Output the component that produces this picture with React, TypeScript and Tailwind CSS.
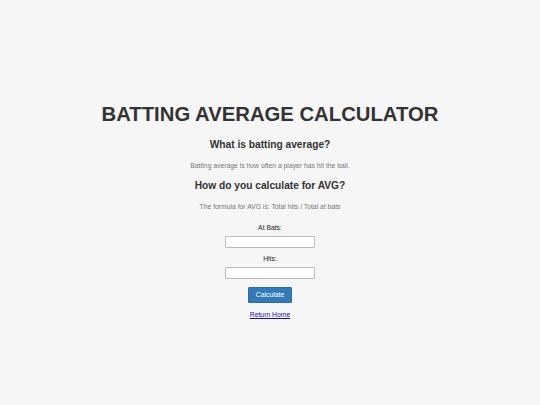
export default function App() {
  return (
    <div
      className="min-h-[405px] w-full bg-[#f6f6f6] flex flex-col items-center pt-[101px] text-center"
      style={{ fontFamily: '"Liberation Sans", Arial, sans-serif' }}
    >
      <h1 className="text-[20.3px] leading-[26px] font-bold text-[#333]">BATTING AVERAGE CALCULATOR</h1>
      <h2 className="mt-[11px] text-[10.2px] leading-[14px] font-bold text-[#333]">What is batting average?</h2>
      <p className="mt-[9px] text-[6.8px] leading-[9px] text-[#777]">
        Batting average is how often a player has hit the ball.
      </p>
      <h3 className="mt-[9px] text-[10.2px] leading-[14px] font-bold text-[#333]">How do you calculate for AVG?</h3>
      <p className="mt-[9px] text-[6.8px] leading-[9px] text-[#777]">
        The formula for AVG is: Total hits / Total at bats
      </p>
      <label className="mt-[12px] text-[6.8px] leading-[9px] text-[#222]">At Bats:</label>
      <input className="mt-[4px] w-[90px] h-[12px] bg-white border border-[#bbb] rounded-[1px]" />
      <label className="mt-[6px] text-[6.8px] leading-[9px] text-[#222]">Hits:</label>
      <input className="mt-[4px] w-[90px] h-[12px] bg-white border border-[#bbb] rounded-[1px]" />
      <button className="mt-[8px] w-[44px] h-[16px] bg-[#337ab7] border border-[#2e6da4] rounded-[1px] text-white text-[6.8px] leading-[14px]">
        Calculate
      </button>
      <a href="#" className="mt-[7px] text-[6.8px] leading-[9px] text-[#1a0dab] underline">
        Return Home
      </a>
    </div>
  );
}
